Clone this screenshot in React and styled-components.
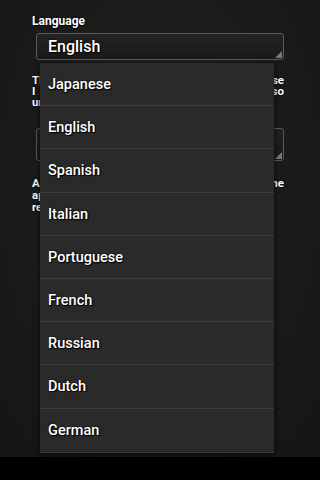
import React from "react"
import styled, { createGlobalStyle } from "styled-components"

const Global = createGlobalStyle`
  html, body {
    margin: 0;
    padding: 0;
    background: #000;
  }
  body {
    font-family: Roboto, "Noto Sans", sans-serif;
    color: #fff;
  }
`

const Screen = styled.div`
  width: 320px;
  height: 480px;
  display: flex;
  flex-direction: column;
  position: relative;
  overflow: hidden;
`

const Content = styled.div`
  flex: 1;
  padding: 14px 36px 0 32px;
  background: radial-gradient(ellipse at 50% 40%, #222 0%, #1b1b1b 55%, #151515 100%);
`

const NavBar = styled.div`
  height: 23px;
  background: #000;
`

const Label = styled.div`
  font-size: 12px;
  font-weight: 700;
  line-height: 14px;
  text-shadow: 0 0 2px #000, 1px 1px 1px #000;
`

const Select = styled.div`
  position: relative;
  margin: ${(p) => p.$mt}px 0 0 4px;
  height: ${(p) => p.$h}px;
  border: 1.5px solid #5a5a5a;
  border-radius: 3px;
  background: linear-gradient(#232323, #191919);
  display: flex;
  align-items: center;
  padding-left: 11px;
  font-size: 16px;
  font-weight: 500;
  text-shadow: 0 0 2px #000, 1px 1px 1px #000;

  &::after {
    content: "";
    position: absolute;
    right: 1px;
    bottom: 1px;
    border-left: 7px solid transparent;
    border-bottom: 7px solid #7a7a7a;
  }
`

const Paragraph = styled.div`
  margin: ${(p) => p.$mt}px 0 0 0;
  font-size: 11.5px;
  font-weight: 700;
  line-height: ${(p) => p.$lh}px;
  text-shadow: 0 0 2px #000;
`

const Line = styled.div`
  white-space: nowrap;
  text-align: ${(p) => (p.$full ? "justify" : "left")};
  text-align-last: ${(p) => (p.$full ? "justify" : "left")};
`

const Menu = styled.ul`
  position: absolute;
  left: 40px;
  top: 63px;
  width: 234px;
  margin: 0;
  padding: 0;
  list-style: none;
  background: #2a2a2a;
  border-bottom: 1px solid #3a3a3a;
  box-shadow: 0 2px 6px rgba(0, 0, 0, 0.7);
`

const Item = styled.li`
  height: 43.2px;
  box-sizing: border-box;
  display: flex;
  align-items: center;
  padding: 1px 0 0 8px;
  font-size: 14.5px;
  font-weight: 500;
  border-bottom: 1px solid #3c3c3c;
  text-shadow: 0 0 2px #000, 1px 1px 1px #000;

  &:last-child {
    border-bottom: none;
  }
`

const languages = [
  "Japanese",
  "English",
  "Spanish",
  "Italian",
  "Portuguese",
  "French",
  "Russian",
  "Dutch",
  "German",
]

const App = () => (
  <Screen>
    <Global />
    <Content>
      <Label>Language</Label>
      <Select $mt={5} $h={25}>English</Select>
      <Paragraph $mt={14.5} $lh={11}>
        <Line $full>This changes the language of all these</Line>
        <Line $full>I can switch back later if you wish, so</Line>
        <Line>undo it.</Line>
      </Paragraph>
      <Select $mt={20.5} $h={31} />
      <Paragraph $mt={16} $lh={12}>
        <Line $full>A restart is required so that the phone</Line>
        <Line>applies the new setting.</Line>
        <Line>restart now.</Line>
      </Paragraph>
    </Content>
    <NavBar />
    <Menu>
      {languages.map((lang) => (
        <Item key={lang}>{lang}</Item>
      ))}
    </Menu>
  </Screen>
)

export default App
